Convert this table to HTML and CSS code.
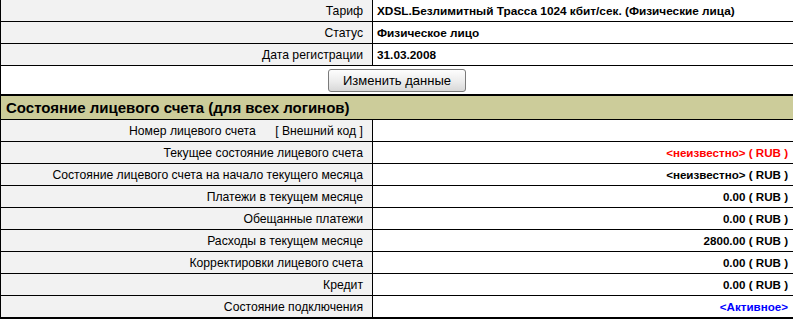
FILE: index.html
```html
<!DOCTYPE html>
<html lang="ru">
<head>
<meta charset="utf-8">
<title>Лицевой счет</title>
<link rel="stylesheet" href="styles.css">
</head>
<body>
<table class="info">
  <tr class="row first">
    <td class="label">Тариф</td>
    <td class="value">XDSL.Безлимитный Трасса 1024 кбит/сек. (Физические лица)</td>
  </tr>
  <tr class="row">
    <td class="label">Статус</td>
    <td class="value">Физическое лицо</td>
  </tr>
  <tr class="row">
    <td class="label">Дата регистрации</td>
    <td class="value">31.03.2008</td>
  </tr>
  <tr class="btn-row">
    <td colspan="2" class="btn-cell"><button class="btn" type="button">Изменить данные</button></td>
  </tr>
  <tr class="head-row">
    <td colspan="2" class="head">Состояние лицевого счета (для всех логинов)</td>
  </tr>
  <tr class="row">
    <td class="label">Номер лицевого счета <span class="ext">[ Внешний код ]</span></td>
    <td class="num"></td>
  </tr>
  <tr class="row">
    <td class="label">Текущее состояние лицевого счета</td>
    <td class="num red">&lt;неизвестно&gt; ( RUB )</td>
  </tr>
  <tr class="row">
    <td class="label">Состояние лицевого счета на начало текущего месяца</td>
    <td class="num">&lt;неизвестно&gt; ( RUB )</td>
  </tr>
  <tr class="row">
    <td class="label">Платежи в текущем месяце</td>
    <td class="num">0.00 ( RUB )</td>
  </tr>
  <tr class="row">
    <td class="label">Обещанные платежи</td>
    <td class="num">0.00 ( RUB )</td>
  </tr>
  <tr class="row">
    <td class="label">Расходы в текущем месяце</td>
    <td class="num">2800.00 ( RUB )</td>
  </tr>
  <tr class="row">
    <td class="label">Корректировки лицевого счета</td>
    <td class="num">0.00 ( RUB )</td>
  </tr>
  <tr class="row">
    <td class="label">Кредит</td>
    <td class="num">0.00 ( RUB )</td>
  </tr>
  <tr class="row last">
    <td class="label">Состояние подключения</td>
    <td class="num blue">&lt;Активное&gt;</td>
  </tr>
</table>
</body>
</html>
```

FILE: styles.css
```css
html, body {
  margin: 0;
  padding: 0;
  background: #ffffff;
  overflow: hidden;
}

body {
  font-family: "Liberation Sans", Arial, sans-serif;
  font-size: 12.2px;
  color: #000000;
}

.info {
  width: 100%;
  border-collapse: collapse;
  border-spacing: 0;
  border-left: 1px solid #000;
}

.info td {
  padding: 0;
  border-bottom: 1px solid #000;
  white-space: nowrap;
}

.row td {
  height: 21px;
}

.label {
  width: 362px;
  background: #f2f2f2;
  text-align: right;
  padding-right: 9px !important;
  border-right: 1px solid #000;
}

.ext {
  margin-left: 16px;
}

.value {
  font-weight: bold;
  font-size: 11.8px;
  padding-left: 4px !important;
  background: #fff;
}

.num {
  font-weight: bold;
  font-size: 11.6px;
  text-align: right;
  padding-right: 5px !important;
  background: #fff;
}

.red { color: #ff0000; }
.blue { color: #0000ff; }

.btn-row td {
  height: 28px;
  border-bottom: 2px solid #000;
  text-align: center;
  background: #fff;
}

.btn {
  font-family: "Liberation Sans", Arial, sans-serif;
  font-size: 13px;
  height: 23px;
  padding: 0 14px;
  border: 1px solid #7a7a7a;
  border-radius: 3px;
  background: linear-gradient(#fdfdfd, #ececec 55%, #d8d8d8);
  color: #000;
  vertical-align: middle;
}

.head {
  height: 23px;
  background: #cccc9a;
  font-weight: bold;
  font-size: 15px;
  padding-left: 5px !important;
}

.row.last td {
  border-bottom: 2px solid #000;
}
```
